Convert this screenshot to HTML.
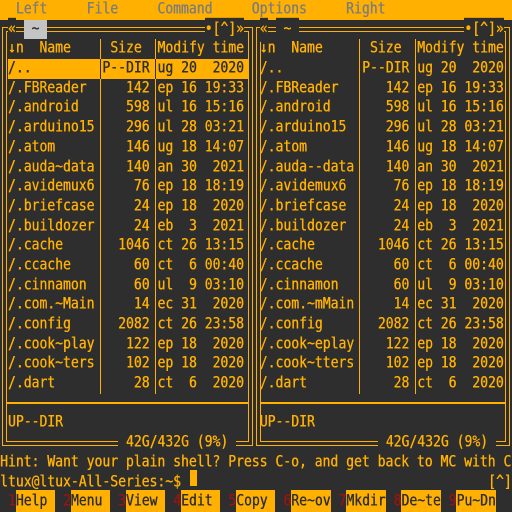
<!DOCTYPE html>
<html><head><meta charset="utf-8"><style>
*{margin:0;padding:0;box-sizing:border-box}
html,body{width:512px;height:512px;overflow:hidden;background:#2e2e2e}
body{position:relative;font-family:"DejaVu Sans Mono","Liberation Mono",monospace;font-size:13.07px;color:#ffb000}
.r{position:absolute;left:0;width:512px;height:19.69px;line-height:19.69px;white-space:pre;transform:scaleY(1.2);transform-origin:50% 55%;text-shadow:0.35px 0 currentColor}
.r span{position:absolute;top:0;white-space:pre}
.n{left:7.87px}.s{left:102.3px;width:47.2px;text-align:right}.t{left:157.4px}
.N{left:259.7px}.S{left:362px;width:47.2px;text-align:right}.T{left:417.1px}
.b{position:absolute;border:1.5px solid #ffb000}
.v{position:absolute;width:1.5px;background:#ffb000}
.h{position:absolute;height:1.5px;background:#ffb000}
.bg{background:#2e2e2e}
.k{color:#9a1414}
.l{background:#ffb000;color:#2e2e2e}
</style></head><body>
<div style="position:absolute;left:0;top:0;width:512px;height:19.5px;background:#ffb000"></div>
<div class="r" style="top:0;color:#7d7d7d">  Left     File     Command     Options     Right</div>

<div class="b" style="left:2px;top:27px;width:251px;height:419px"></div>
<div class="b" style="left:6px;top:31px;width:243px;height:411px"></div>
<div class="b" style="left:256px;top:27px;width:254px;height:419px"></div>
<div class="b" style="left:260px;top:31px;width:246px;height:411px"></div>
<div class="h" style="left:7px;top:402px;width:241px"></div>
<div class="h" style="left:261px;top:402px;width:244px"></div>
<div class="v" style="left:99.5px;top:39px;height:355px"></div>
<div class="v" style="left:154.5px;top:39px;height:355px"></div>
<div class="v" style="left:358.5px;top:39px;height:355px"></div>
<div class="v" style="left:414.5px;top:39px;height:355px"></div>

<div style="position:absolute;left:23.6px;top:19.69px;width:23.6px;height:19.3px;background:#c4c4c4"></div>
<div class="r" style="top:19.69px">
<span class="bg" style="left:7.87px">«</span><span style="left:23.6px;color:#2e2e2e"> ~ </span><span class="bg" style="left:204.6px">•[^]»</span>
<span class="bg" style="left:259.7px">«</span><span class="bg" style="left:275.5px"> ~ </span><span class="bg" style="left:464.3px">•[^]»</span>
</div>

<div class="r" style="top:39.38px">
<span style="left:7.87px">↓n  Name</span><span style="left:110.2px">Size</span><span class="t">Modify time</span>
<span class="N">↓n  Name</span><span style="left:369.9px">Size</span><span class="T">Modify time</span>
</div>

<div style="position:absolute;left:7.5px;top:59.07px;width:240px;height:19.69px;background:#ffb000"></div>
<div style="position:absolute;left:99.5px;top:59.07px;width:1.5px;height:19.69px;background:#2e2e2e"></div>
<div style="position:absolute;left:154.5px;top:59.07px;width:1.5px;height:19.69px;background:#2e2e2e"></div>
<div class="r" style="top:59.07px">
<span class="n" style="color:#2e2e2e">/..</span><span class="s" style="color:#2e2e2e">P--DIR</span><span class="t" style="color:#2e2e2e">ug 20  2020</span>
<span class="N">/..</span><span class="S">P--DIR</span><span class="T">ug 20  2020</span>
</div>

<div class="r" style="top:78.76px"><span class="n">/.FBReader</span><span class="s">142</span><span class="t">ep 16 19:33</span><span class="N">/.FBReader</span><span class="S">142</span><span class="T">ep 16 19:33</span></div>
<div class="r" style="top:98.45px"><span class="n">/.android</span><span class="s">598</span><span class="t">ul 16 15:16</span><span class="N">/.android</span><span class="S">598</span><span class="T">ul 16 15:16</span></div>
<div class="r" style="top:118.14px"><span class="n">/.arduino15</span><span class="s">296</span><span class="t">ul 28 03:21</span><span class="N">/.arduino15</span><span class="S">296</span><span class="T">ul 28 03:21</span></div>
<div class="r" style="top:137.83px"><span class="n">/.atom</span><span class="s">146</span><span class="t">ug 18 14:07</span><span class="N">/.atom</span><span class="S">146</span><span class="T">ug 18 14:07</span></div>
<div class="r" style="top:157.52px"><span class="n">/.auda~data</span><span class="s">140</span><span class="t">an 30  2021</span><span class="N">/.auda--data</span><span class="S">140</span><span class="T">an 30  2021</span></div>
<div class="r" style="top:177.21px"><span class="n">/.avidemux6</span><span class="s">76</span><span class="t">ep 18 18:19</span><span class="N">/.avidemux6</span><span class="S">76</span><span class="T">ep 18 18:19</span></div>
<div class="r" style="top:196.9px"><span class="n">/.briefcase</span><span class="s">24</span><span class="t">ep 18  2020</span><span class="N">/.briefcase</span><span class="S">24</span><span class="T">ep 18  2020</span></div>
<div class="r" style="top:216.59px"><span class="n">/.buildozer</span><span class="s">24</span><span class="t">eb  3  2021</span><span class="N">/.buildozer</span><span class="S">24</span><span class="T">eb  3  2021</span></div>
<div class="r" style="top:236.28px"><span class="n">/.cache</span><span class="s">1046</span><span class="t">ct 26 13:15</span><span class="N">/.cache</span><span class="S">1046</span><span class="T">ct 26 13:15</span></div>
<div class="r" style="top:255.97px"><span class="n">/.ccache</span><span class="s">60</span><span class="t">ct  6 00:40</span><span class="N">/.ccache</span><span class="S">60</span><span class="T">ct  6 00:40</span></div>
<div class="r" style="top:275.66px"><span class="n">/.cinnamon</span><span class="s">60</span><span class="t">ul  9 03:10</span><span class="N">/.cinnamon</span><span class="S">60</span><span class="T">ul  9 03:10</span></div>
<div class="r" style="top:295.35px"><span class="n">/.com.~Main</span><span class="s">14</span><span class="t">ec 31  2020</span><span class="N">/.com.~mMain</span><span class="S">14</span><span class="T">ec 31  2020</span></div>
<div class="r" style="top:315.04px"><span class="n">/.config</span><span class="s">2082</span><span class="t">ct 26 23:58</span><span class="N">/.config</span><span class="S">2082</span><span class="T">ct 26 23:58</span></div>
<div class="r" style="top:334.73px"><span class="n">/.cook~play</span><span class="s">122</span><span class="t">ep 18  2020</span><span class="N">/.cook~eplay</span><span class="S">122</span><span class="T">ep 18  2020</span></div>
<div class="r" style="top:354.42px"><span class="n">/.cook~ters</span><span class="s">102</span><span class="t">ep 18  2020</span><span class="N">/.cook~tters</span><span class="S">102</span><span class="T">ep 18  2020</span></div>
<div class="r" style="top:374.11px"><span class="n">/.dart</span><span class="s">28</span><span class="t">ct  6  2020</span><span class="N">/.dart</span><span class="S">28</span><span class="T">ct  6  2020</span></div>

<div class="r" style="top:413.49px"><span class="n">UP--DIR</span><span class="N">UP--DIR</span></div>
<div style="position:absolute;left:118px;top:437px;width:118px;height:12px;background:#2e2e2e"></div>
<div style="position:absolute;left:377.8px;top:437px;width:118px;height:12px;background:#2e2e2e"></div>
<div class="r" style="top:433.18px"><span style="left:125.9px">42G/432G (9%)</span><span style="left:385.7px">42G/432G (9%)</span></div>

<div class="r" style="top:452.87px">Hint: Want your plain shell? Press C-o, and get back to MC with C</div>
<div class="r" style="top:472.56px">ltux@ltux-All-Series:~$ <span style="left:488px">[^]</span></div>
<div style="position:absolute;left:190px;top:470px;width:7px;height:16px;background:#ffb000"></div>

<div style="position:absolute;top:490px;left:15.74px;width:39.4px;height:22px;background:#ffb000"></div>
<div style="position:absolute;top:490px;left:70.83px;width:39.4px;height:22px;background:#ffb000"></div>
<div style="position:absolute;top:490px;left:125.92px;width:39.4px;height:22px;background:#ffb000"></div>
<div style="position:absolute;top:490px;left:181.01px;width:39.4px;height:22px;background:#ffb000"></div>
<div style="position:absolute;top:490px;left:236.1px;width:39.4px;height:22px;background:#ffb000"></div>
<div style="position:absolute;top:490px;left:291.19px;width:39.4px;height:22px;background:#ffb000"></div>
<div style="position:absolute;top:490px;left:346.28px;width:39.4px;height:22px;background:#ffb000"></div>
<div style="position:absolute;top:490px;left:401.37px;width:39.4px;height:22px;background:#ffb000"></div>
<div style="position:absolute;top:490px;left:456.46px;width:39.4px;height:22px;background:#ffb000"></div>
<div class="r" style="top:492.25px">
<span class="k" style="left:7.87px">1</span><span style="left:15.74px;color:#2e2e2e">Help</span>
<span class="k" style="left:62.96px">2</span><span style="left:70.83px;color:#2e2e2e">Menu</span>
<span class="k" style="left:118.05px">3</span><span style="left:125.92px;color:#2e2e2e">View</span>
<span class="k" style="left:173.14px">4</span><span style="left:181.01px;color:#2e2e2e">Edit</span>
<span class="k" style="left:228.23px">5</span><span style="left:236.1px;color:#2e2e2e">Copy</span>
<span class="k" style="left:283.32px">6</span><span style="left:291.19px;color:#2e2e2e">Re~ov</span>
<span class="k" style="left:338.41px">7</span><span style="left:346.28px;color:#2e2e2e">Mkdir</span>
<span class="k" style="left:393.5px">8</span><span style="left:401.37px;color:#2e2e2e">De~te</span>
<span class="k" style="left:448.59px">9</span><span style="left:456.46px;color:#2e2e2e">Pu~Dn</span>
</div>
</body></html>
